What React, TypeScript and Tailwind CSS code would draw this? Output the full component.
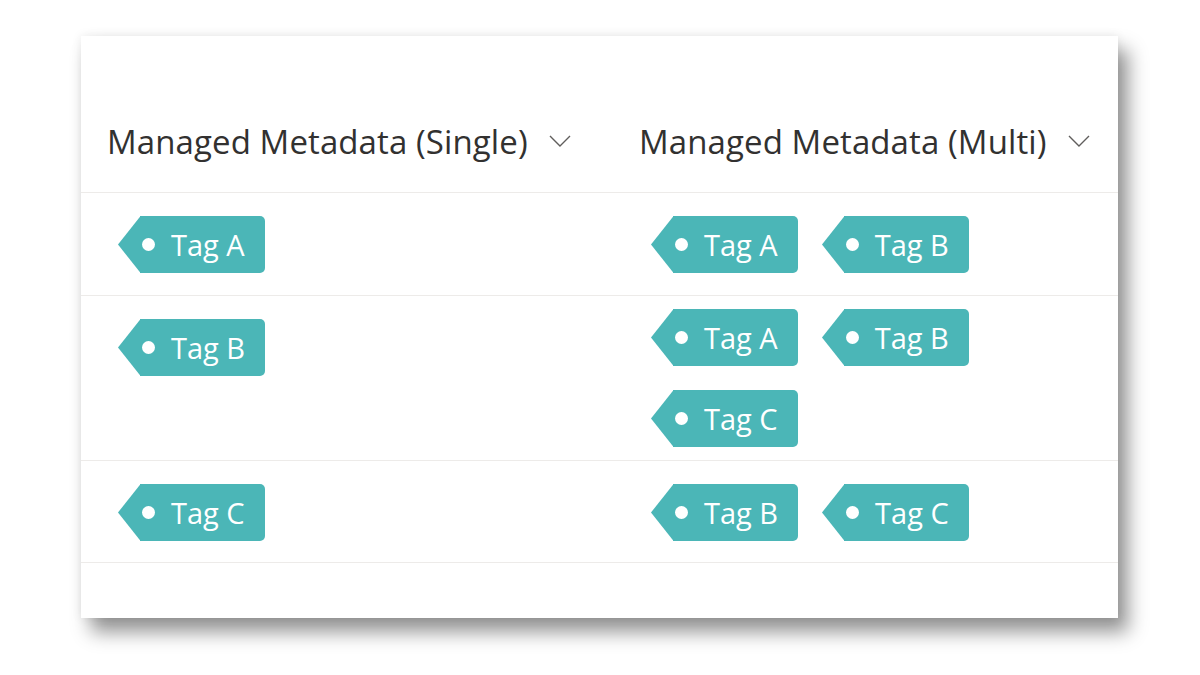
import React from "react";

const TAG = "#4bb6b7";

function Tag({ label }: { label: string }) {
  return (
    <div className="flex h-[57px] items-stretch">
      <svg width="22" height="57" viewBox="0 0 22 57" className="block shrink-0">
        <polygon points="22.5,0 0,28.5 22.5,57" fill={TAG} />
      </svg>
      <div className="relative flex items-center rounded-r-[5px] bg-[#4bb6b7] pl-[31px] pr-[20px]">
        <span className="absolute left-[2px] top-[22px] h-[13px] w-[13px] rounded-full bg-white" />
        <span className="text-[29px] leading-none text-white">{label}</span>
      </div>
    </div>
  );
}

function Chevron() {
  return (
    <svg width="22" height="12" viewBox="0 0 22 12" className="ml-[21px] mt-[-2px]">
      <polyline points="1,1 11,11 21,1" fill="none" stroke="#605e5c" strokeWidth="1.4" />
    </svg>
  );
}

const rows: { single: string; multi: string[]; h: string; multiPt: string }[] = [
  { single: "Tag A", multi: ["Tag A", "Tag B"], h: "h-[103px]", multiPt: "pt-[23px]" },
  { single: "Tag B", multi: ["Tag A", "Tag B", "Tag C"], h: "h-[165px]", multiPt: "pt-[13px]" },
  { single: "Tag C", multi: ["Tag B", "Tag C"], h: "h-[102px]", multiPt: "pt-[23px]" },
];

export default function App() {
  return (
    <div
      className="h-[675px] w-[1200px] bg-white pl-[81px] pt-[36px]"
      style={{ fontFamily: '"Open Sans", "Noto Sans", sans-serif' }}
    >
      <div className="flex h-[582px] w-[1037px] flex-col bg-white shadow-[10px_14px_18px_rgba(0,0,0,0.42),0_0_10px_rgba(0,0,0,0.08)]">
        <div className="grid h-[157px] grid-cols-[532px_1fr] border-b border-[#edebe9] pb-[34px]">
          {["Managed Metadata (Single)", "Managed Metadata (Multi)"].map((t) => (
            <div key={t} className="flex items-end pl-[26px]">
              <div className="flex items-center">
                <span className="text-[33px] font-medium leading-none tracking-[0.1px] text-[#323130]">{t}</span>
                <Chevron />
              </div>
            </div>
          ))}
        </div>
        {rows.map((r, i) => (
          <div key={i} className={`grid grid-cols-[532px_1fr] border-b border-[#edebe9] ${r.h}`}>
            <div className="pl-[37px] pt-[23px]">
              <div className="flex">
                <Tag label={r.single} />
              </div>
            </div>
            <div className={`pl-[38px] ${r.multiPt}`}>
              <div className="flex w-[340px] flex-wrap gap-x-[24px] gap-y-[24px]">
                {r.multi.map((m) => (
                  <Tag key={m} label={m} />
                ))}
              </div>
            </div>
          </div>
        ))}
      </div>
    </div>
  );
}
